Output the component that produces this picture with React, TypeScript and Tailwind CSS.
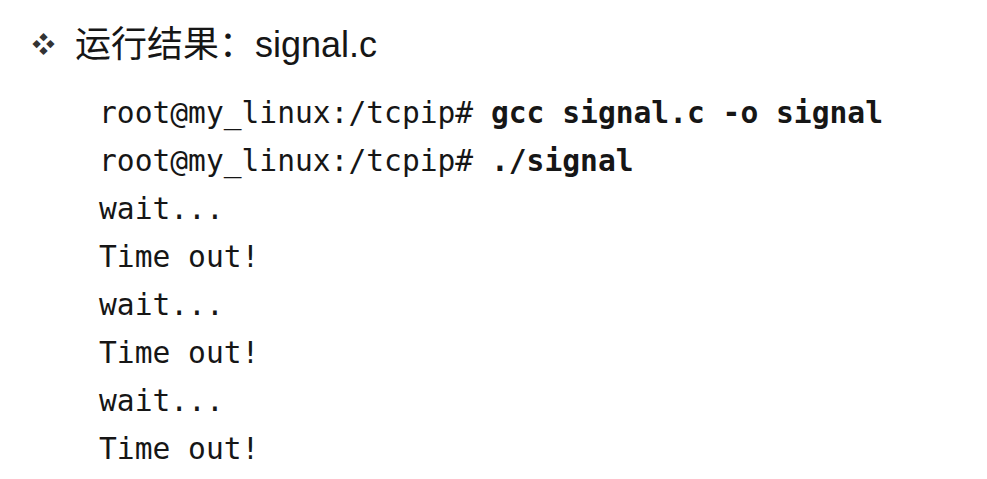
import React from "react";

const lines: { prompt?: string; cmd?: string; text?: string }[] = [
  { prompt: "root@my_linux:/tcpip# ", cmd: "gcc signal.c -o signal" },
  { prompt: "root@my_linux:/tcpip# ", cmd: "./signal" },
  { text: "wait..." },
  { text: "Time out!" },
  { text: "wait..." },
  { text: "Time out!" },
  { text: "wait..." },
  { text: "Time out!" },
];

export default function App() {
  return (
    <div className="w-[987px] h-[479px] bg-white text-[#161616] overflow-hidden">
      <div className="flex items-center pl-[32px] pt-[22px] h-[68px] font-['Liberation_Sans','Noto_Sans_CJK_SC',sans-serif] text-[36px]">
        <span className="text-[23px] w-[43px] text-[#333]">❖</span>
        <span>运行结果：signal.c</span>
      </div>
      <div className="pl-[99px] pt-[21px] font-['DejaVu_Sans_Mono',monospace] text-[29.6px] leading-[48px] whitespace-pre">
        {lines.map((l, i) => (
          <div key={i}>
            {l.prompt ? (
              <>
                <span>{l.prompt}</span>
                <span className="font-bold">{l.cmd}</span>
              </>
            ) : (
              <span>{l.text}</span>
            )}
          </div>
        ))}
      </div>
    </div>
  );
}
